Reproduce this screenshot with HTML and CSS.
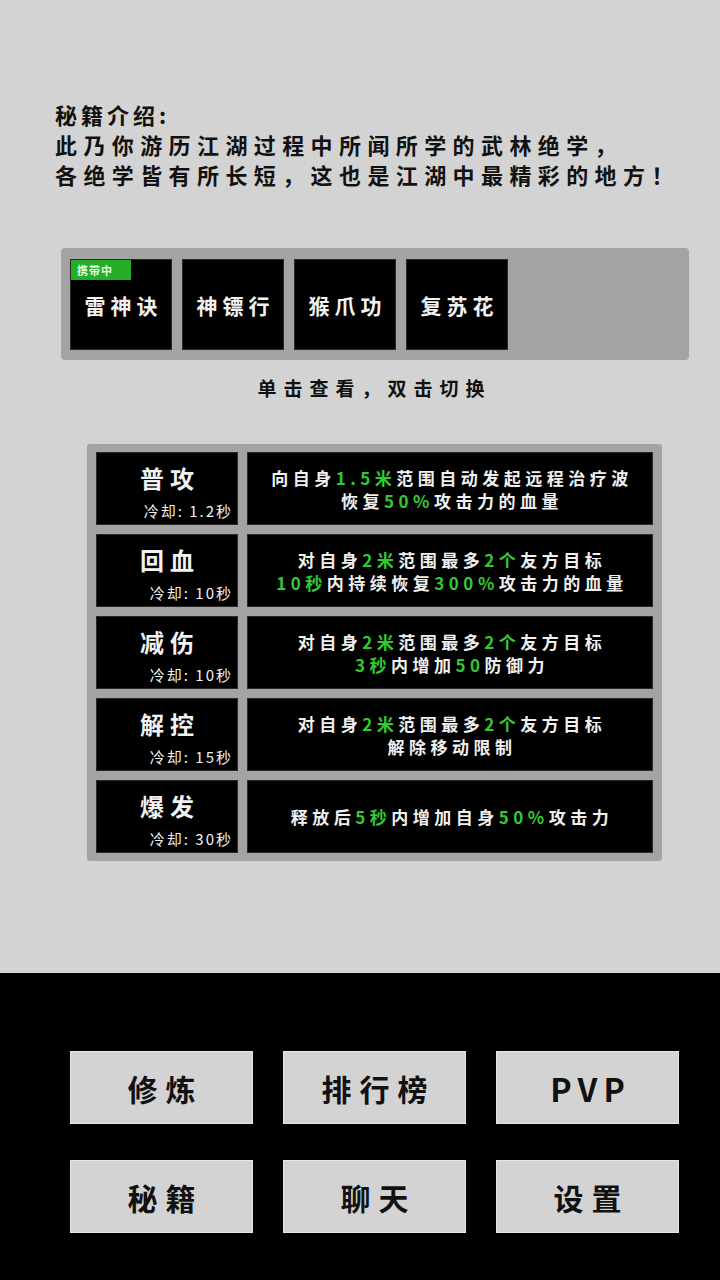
FILE: index.html
```html
<!DOCTYPE html>
<html lang="zh-CN">
<head>
<meta charset="utf-8">
<link rel="stylesheet" href="styles.css">
</head>
<body>
<div class="page">
  <section class="main">
    <div class="intro">
      <div class="intro-title">秘籍介绍:</div>
      <div>此乃你游历江湖过程中所闻所学的武林绝学，</div>
      <div>各绝学皆有所长短，这也是江湖中最精彩的地方！</div>
    </div>

    <div class="slots">
      <div class="slot"><span class="badge">携带中</span><span class="slot-name">雷神诀</span></div>
      <div class="slot"><span class="slot-name">神镖行</span></div>
      <div class="slot"><span class="slot-name">猴爪功</span></div>
      <div class="slot"><span class="slot-name">复苏花</span></div>
    </div>

    <div class="hint">单击查看，双击切换</div>

    <div class="skills">
      <div class="skill">
        <div class="skill-head"><div class="skill-name">普攻</div><div class="cd">冷却: 1.2秒</div></div>
        <div class="skill-desc"><div>向自身<em>1.5米</em>范围自动发起远程治疗波</div><div>恢复<em>50%</em>攻击力的血量</div></div>
      </div>
      <div class="skill">
        <div class="skill-head"><div class="skill-name">回血</div><div class="cd">冷却: 10秒</div></div>
        <div class="skill-desc"><div>对自身<em>2米</em>范围最多<em>2个</em>友方目标</div><div><em>10秒</em>内持续恢复<em>300%</em>攻击力的血量</div></div>
      </div>
      <div class="skill">
        <div class="skill-head"><div class="skill-name">减伤</div><div class="cd">冷却: 10秒</div></div>
        <div class="skill-desc"><div>对自身<em>2米</em>范围最多<em>2个</em>友方目标</div><div><em>3秒</em>内增加<em>50</em>防御力</div></div>
      </div>
      <div class="skill">
        <div class="skill-head"><div class="skill-name">解控</div><div class="cd">冷却: 15秒</div></div>
        <div class="skill-desc"><div>对自身<em>2米</em>范围最多<em>2个</em>友方目标</div><div>解除移动限制</div></div>
      </div>
      <div class="skill">
        <div class="skill-head"><div class="skill-name">爆发</div><div class="cd">冷却: 30秒</div></div>
        <div class="skill-desc"><div>释放后<em>5秒</em>内增加自身<em>50%</em>攻击力</div></div>
      </div>
    </div>
  </section>

  <nav class="menu">
    <div class="btn">修炼</div>
    <div class="btn">排行榜</div>
    <div class="btn latin">PVP</div>
    <div class="btn">秘籍</div>
    <div class="btn">聊天</div>
    <div class="btn">设置</div>
  </nav>
</div>
</body>
</html>
```

FILE: styles.css
```css
* { box-sizing: border-box; }
html, body { margin: 0; padding: 0; }
body {
  font-family: "Noto Sans CJK SC", "Noto Sans", sans-serif;
  background: #d3d3d3;
}
.page {
  width: 720px;
  height: 1280px;
  display: flex;
  flex-direction: column;
}
.main {
  height: 973px;
  background: #d3d3d3;
  display: flex;
  flex-direction: column;
}
.intro {
  margin: 99px 0 0 55px;
  font-size: 22px;
  line-height: 30px;
  font-weight: 700;
  letter-spacing: 6.4px;
  color: #111;
}
.intro-title { letter-spacing: 4px; }

.slots {
  margin: 59px 0 0 61px;
  width: 628px;
  height: 112px;
  background: #a3a3a3;
  border-radius: 4px;
  padding: 11px 9px 10px;
  display: flex;
  gap: 10px;
}
.slot {
  position: relative;
  width: 102px;
  height: 91px;
  background: #000;
  border: 1px solid #2a2a2a;
  display: flex;
  align-items: center;
  justify-content: center;
}
.slot-name {
  color: #f2f2f2;
  font-size: 21px;
  font-weight: 700;
  letter-spacing: 5px;
  padding-left: 5px;
}
.badge {
  position: absolute;
  left: 0;
  top: 0;
  width: 60px;
  height: 20px;
  background: #25ad25;
  color: #e8ffe8;
  font-size: 11px;
  font-weight: 700;
  line-height: 20px;
  padding-left: 6px;
  letter-spacing: 1px;
}

.hint {
  margin: 14px 0 0 22px;
  text-align: center;
  font-size: 19px;
  line-height: 28px;
  font-weight: 700;
  letter-spacing: 7px;
  padding-left: 7px;
  color: #111;
}

.skills {
  margin: 42px 0 0 87px;
  width: 575px;
  background: #a3a3a3;
  border-radius: 3px;
  padding: 8px 9px 8px;
  display: flex;
  flex-direction: column;
  gap: 9px;
}
.skill {
  height: 73px;
  display: flex;
  gap: 9px;
}
.skill-head {
  width: 142px;
  background: #000;
  border: 1px solid #2a2a2a;
  color: #f2f2f2;
  display: flex;
  flex-direction: column;
  padding: 10px 6px 0 0;
}
.skill-name {
  text-align: center;
  padding-left: 12px;
  font-size: 24px;
  line-height: 30px;
  font-weight: 700;
  letter-spacing: 6px;
}
.cd {
  text-align: right;
  font-size: 15px;
  line-height: 20px;
  margin-top: 8px;
  letter-spacing: 2px;
  margin-right: -2px;
}
.skill-desc {
  flex: 1;
  background: #000;
  border: 1px solid #2a2a2a;
  color: #f0f0f0;
  display: flex;
  flex-direction: column;
  justify-content: center;
  align-items: center;
  font-size: 17px;
  line-height: 23px;
  font-weight: 700;
  letter-spacing: 4.5px;
  padding-left: 4px;
}
.skill-desc em {
  font-style: normal;
  color: #33c933;
}

.menu {
  flex: 1;
  background: #000;
  padding: 78px 0 0 70px;
  display: grid;
  grid-template-columns: repeat(3, 183px);
  grid-auto-rows: 73px;
  column-gap: 30px;
  row-gap: 36px;
  align-content: start;
}
.btn {
  background: #d3d3d3;
  border: 1px solid #e6e6e6;
  display: flex;
  align-items: center;
  justify-content: center;
  font-size: 30px;
  font-weight: 700;
  letter-spacing: 8px;
  padding-left: 8px;
  color: #111;
}
.btn.latin {
  font-size: 32px;
  letter-spacing: 6px;
  padding-left: 6px;
}
```
